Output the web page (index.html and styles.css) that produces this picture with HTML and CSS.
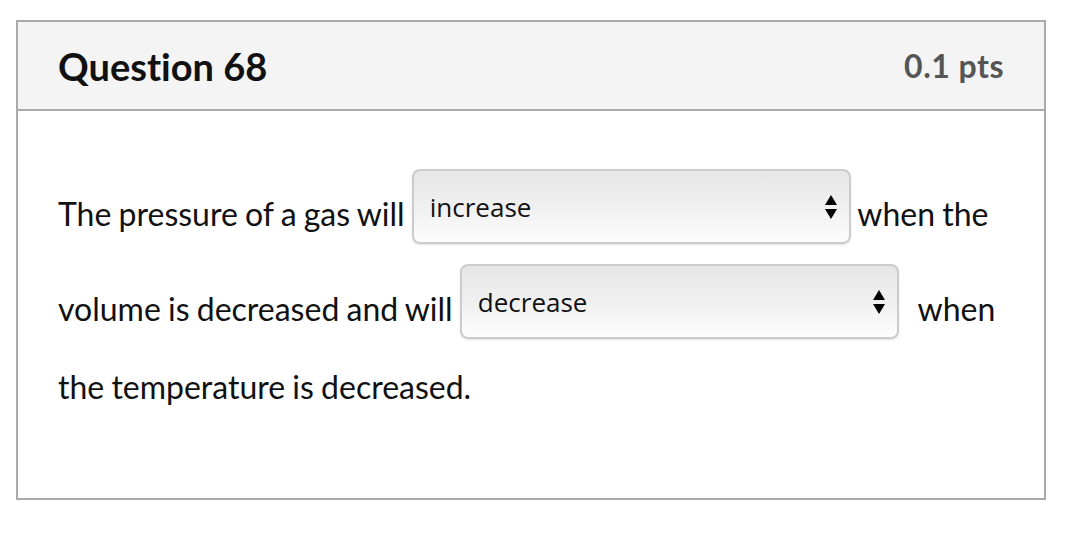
FILE: index.html
```html
<!DOCTYPE html>
<html lang="en">
<head>
    <meta charset="UTF-8">
    <title>Question 68</title>
    <link rel="stylesheet" href="styles.css">
</head>
<body>
<div class="QuestionCard">
    <div class="QuestionHeader">
        <h2 class="QuestionName">Question 68</h2>
        <span class="QuestionPoints">0.1 pts</span>
    </div>
    <div class="QuestionBody">
        <p class="QuestionText">
            The pressure of a gas will
            <span class="DropDown">
                <span class="DropDownValue">increase</span>
                <svg class="DropDownArrows" width="12" height="24" viewBox="0 0 12 24">
                    <polygon points="0,10 6,0 12,10"/>
                    <polygon points="0,14 12,14 6,24"/>
                </svg>
            </span>
            when the volume is decreased and will
            <span class="DropDown DropDownWide">
                <span class="DropDownValue">decrease</span>
                <svg class="DropDownArrows" width="12" height="24" viewBox="0 0 12 24">
                    <polygon points="0,10 6,0 12,10"/>
                    <polygon points="0,14 12,14 6,24"/>
                </svg>
            </span>
            &nbsp;when the temperature is decreased.
        </p>
    </div>
</div>
</body>
</html>
```

FILE: styles.css
```css
body {
    margin: 0;
    padding: 20px 16px;
    font-family: Lato, "Open Sans", sans-serif;
    font-variant-ligatures: none;
    color: #111;
}

.QuestionCard {
    width: 1030px;
    height: 480px;
    box-sizing: border-box;
    border: 2px solid #aaaaaa;
}

.QuestionHeader {
    display: flex;
    justify-content: space-between;
    align-items: center;
    height: 87px;
    padding: 0 40px 0 40px;
    background-color: #f4f4f4;
    border-bottom: 2px solid #aaaaaa;
}

.QuestionName {
    margin: 0;
    font-size: 38px;
    font-weight: 700;
}

.QuestionPoints {
    font-size: 32px;
    font-weight: 700;
    letter-spacing: 0.5px;
    color: #555555;
}

.QuestionBody {
    padding: 48px 40px 0 40px;
}

.QuestionText {
    margin: 0;
    font-size: 32px;
    line-height: 76px;
    word-spacing: -1px;
}

.DropDown {
    display: inline-flex;
    align-items: center;
    justify-content: space-between;
    box-sizing: border-box;
    width: 439px;
    height: 75px;
    margin: 10px 0;
    padding: 0 12px 0 16px;
    vertical-align: 9px;
    border: 2px solid #cccccc;
    border-radius: 8px;
    background: linear-gradient(to bottom, #e6e6e6, #f2f2f2 60%, #fdfdfd);
    box-shadow: 0 1px 2px rgba(0, 0, 0, 0.12);
    line-height: normal;
    word-spacing: normal;
}

/* second drop-down has extra room before the next word */
.DropDownWide {
    margin-right: 5px;
}

.DropDownValue {
    font-family: "Open Sans", sans-serif;
    font-size: 26px;
    color: #111;
}

.DropDownArrows polygon {
    fill: #000;
}
```
